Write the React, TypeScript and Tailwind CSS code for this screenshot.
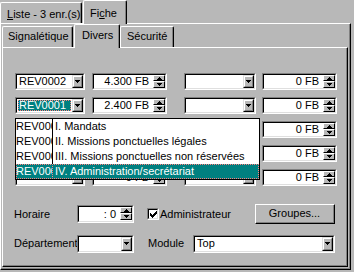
import React from "react";

function Down() {
  return (
    <svg width="5" height="3" shapeRendering="crispEdges" className="block">
      <rect x="0" y="0" width="5" height="1" fill="#000" />
      <rect x="1" y="1" width="3" height="1" fill="#000" />
      <rect x="2" y="2" width="1" height="1" fill="#000" />
    </svg>
  );
}

function Up() {
  return (
    <svg width="5" height="3" shapeRendering="crispEdges" className="block">
      <rect x="2" y="0" width="1" height="1" fill="#000" />
      <rect x="1" y="1" width="3" height="1" fill="#000" />
      <rect x="0" y="2" width="5" height="1" fill="#000" />
    </svg>
  );
}

function Check() {
  const rows: [number, number, number][] = [
    [6, 0, 1],
    [5, 1, 2],
    [0, 2, 1],
    [4, 2, 3],
    [0, 3, 2],
    [3, 3, 3],
    [0, 4, 5],
    [1, 5, 3],
    [2, 6, 1],
  ];
  return (
    <svg width="7" height="7" shapeRendering="crispEdges" className="block">
      {rows.map(([x, y, w], i) => (
        <rect key={i} x={x} y={y} width={w} height={1} fill="#000" />
      ))}
    </svg>
  );
}

function Sunken({ className, children }: { className: string; children?: React.ReactNode }) {
  return (
    <div className={"border border-t-[#808080] border-l-[#808080] border-r-white border-b-white " + className}>
      <div className="flex h-full border border-t-black border-l-black border-r-[#dfdfdf] border-b-[#dfdfdf] bg-white">
        {children}
      </div>
    </div>
  );
}

function ComboBtn() {
  return (
    <div className="h-full w-[11px] border border-t-[#dfdfdf] border-l-[#dfdfdf] border-r-black border-b-black">
      <div className="flex h-full items-center justify-center border border-t-white border-l-white border-r-[#808080] border-b-[#808080] bg-[#b8b8b8]">
        <Down />
      </div>
    </div>
  );
}

function SpinBtns() {
  return (
    <div className="flex h-full w-[12px] flex-col">
      <div className="flex h-[6px] items-center justify-center border border-t-white border-l-white border-r-black border-b-black bg-[#b8b8b8]">
        <Up />
      </div>
      <div className="flex h-[7px] items-center justify-center border border-t-white border-l-white border-r-black border-b-black bg-[#b8b8b8]">
        <Down />
      </div>
    </div>
  );
}

function Combo({ className, text, selected }: { className: string; text?: string; selected?: boolean }) {
  return (
    <Sunken className={className}>
      <div className="flex min-w-0 flex-1 items-center overflow-hidden whitespace-nowrap">
        {selected ? (
          <div className="m-[1px] flex h-[11px] flex-1 items-center bg-[#008080] pl-[1px] text-white outline outline-1 outline-dotted -outline-offset-1 outline-[#ff7f7f]">
            {text}
          </div>
        ) : (
          <span className="pl-[2px]">{text}</span>
        )}
      </div>
      <ComboBtn />
    </Sunken>
  );
}

function Spin({ className, text }: { className: string; text: string }) {
  return (
    <Sunken className={className}>
      <div className="flex flex-1 items-center justify-end whitespace-nowrap pr-[4px]">{text}</div>
      <SpinBtns />
    </Sunken>
  );
}

const items: [string, string][] = [
  ["REV0001", "I. Mandats"],
  ["REV0002", "II. Missions ponctuelles légales"],
  ["REV0003", "III. Missions ponctuelles non réservées"],
  ["REV0004", "IV. Administration/secrétariat"],
];

function Row({ children }: { children: React.ReactNode }) {
  return <div className="flex h-[17px]">{children}</div>;
}

export default function App() {
  return (
    <div className="h-[272px] w-[354px] overflow-hidden bg-[#b8b8b8] font-['Liberation_Sans',Arial,sans-serif] text-[11px] leading-[13px] text-black">
      {/* outer tabs */}
      <div className="flex h-[23px] items-end">
        <div className="h-[21px] w-[82px] rounded-tl-[2px] rounded-tr-[2px] border-t border-l border-r border-t-white border-l-white border-r-black">
          <div className="h-full border-r border-r-[#808080] pl-[6px] pt-[5px] whitespace-nowrap">
            <span className="underline">L</span>iste - 3 enr.(s)
          </div>
        </div>
        <div className="relative z-10 -mb-[1px] ml-[1px] h-[24px] w-[44px] rounded-tl-[2px] rounded-tr-[2px] border-t border-l border-r border-t-white border-l-white border-r-black bg-[#b8b8b8]">
          <div className="h-full border-r border-r-[#808080] pl-[6px] pt-[6px] whitespace-nowrap">
            Fi<span className="underline">c</span>he
          </div>
        </div>
      </div>

      {/* outer panel */}
      <div className="h-[247px] w-[351px] border border-t-white border-l-white border-r-black border-b-black">
        <div className="flex h-full flex-col border-r border-b border-r-[#808080] border-b-[#808080] pb-[1px] pl-[1px] pr-[1px]">
          {/* inner tabs */}
          <div className="flex h-[23px] shrink-0 items-end">
            <div className="h-[21px] w-[71px] rounded-tl-[2px] rounded-tr-[2px] border-t border-l border-r border-t-white border-l-white border-r-black">
              <div className="h-full border-r border-r-[#808080] pl-[5px] pt-[3px] whitespace-nowrap">Signalétique</div>
            </div>
            <div className="relative z-10 -mb-[1px] ml-[1px] h-[24px] w-[46px] rounded-tl-[2px] rounded-tr-[2px] border-t border-l border-r border-t-white border-l-white border-r-black bg-[#b8b8b8]">
              <div className="h-full border-r border-r-[#808080] pl-[7px] pt-[4px] whitespace-nowrap">Divers</div>
            </div>
            <div className="h-[21px] w-[54px] rounded-tl-[2px] rounded-tr-[2px] border-t border-l border-r border-t-white border-l-white border-r-black">
              <div className="h-full border-r border-r-[#808080] pl-[6px] pt-[3px] whitespace-nowrap">Sécurité</div>
            </div>
          </div>

          {/* inner panel */}
          <div className="flex-1 border border-t-white border-l-white border-r-black border-b-black">
            <div className="flex h-full flex-col border-r border-b border-r-[#808080] border-b-[#808080] pl-[12px] pt-[25px]">
              <div className="flex flex-col gap-[7px]">
                <Row>
                  <Combo className="h-[17px] w-[70px]" text="REV0002" />
                  <Spin className="ml-[7px] h-[17px] w-[75px]" text="4.300 FB" />
                  <Combo className="ml-[17px] h-[17px] w-[72px]" />
                  <Spin className="ml-[6px] h-[17px] w-[75px]" text="0 FB" />
                </Row>
                <Row>
                  <div className="relative">
                    <Combo className="h-[17px] w-[70px]" text="REV0001" selected />
                    <div className="absolute left-0 top-[21px] z-20 w-[245px] border border-black bg-white">
                      {items.map(([c, t], i) => {
                        const sel = i === 3;
                        return (
                          <div
                            key={i}
                            className={
                              sel
                                ? "flex h-[15px] items-center whitespace-nowrap bg-[#008080] text-white outline outline-1 outline-dotted -outline-offset-1 outline-[#ff7f7f]"
                                : "flex h-[15px] items-center whitespace-nowrap"
                            }
                          >
                            <div className="w-[36px] overflow-hidden">{c}</div>
                            <div
                              className={
                                sel
                                  ? "h-full border-l border-dotted border-l-[#ff7f7f]"
                                  : "h-full border-l border-l-black"
                              }
                            />
                            <div className="pl-[2px]">{t}</div>
                          </div>
                        );
                      })}
                    </div>
                  </div>
                  <Spin className="ml-[7px] h-[17px] w-[75px]" text="2.400 FB" />
                  <Combo className="ml-[17px] h-[17px] w-[72px]" />
                  <Spin className="ml-[6px] h-[17px] w-[75px]" text="0 FB" />
                </Row>
                {[0, 1, 2].map((k) => (
                  <Row key={k}>
                    <Combo className="h-[17px] w-[70px]" />
                    <Spin className="ml-[7px] h-[17px] w-[75px]" text="0 FB" />
                    <Combo className="ml-[17px] h-[17px] w-[72px]" />
                    <Spin className="ml-[6px] h-[17px] w-[75px]" text="0 FB" />
                  </Row>
                ))}
              </div>

              {/* Horaire row */}
              <div className="mr-[11px] mt-[18px] flex h-[20px] items-center">
                <div className="-ml-[1px] w-[63px] whitespace-nowrap">Horaire</div>
                <Spin className="h-[18px] w-[57px]" text=": 0" />
                <div className="ml-[13px] h-[12px] w-[12px] border border-t-[#808080] border-l-[#808080] border-r-white border-b-white">
                  <div className="flex h-full items-center justify-center border border-t-black border-l-black border-r-[#dfdfdf] border-b-[#dfdfdf] bg-white">
                    <Check />
                  </div>
                </div>
                <div className="ml-[1px] whitespace-nowrap">Administrateur</div>
                <div className="ml-auto h-[20px] w-[80px] border border-t-white border-l-white border-r-black border-b-black">
                  <div className="flex h-full items-center justify-center border-r border-b border-r-[#808080] border-b-[#808080]">
                    Groupes...
                  </div>
                </div>
              </div>

              {/* Département row */}
              <div className="mt-[10px] flex h-[19px] items-center">
                <div className="-ml-[1px] w-[63px] whitespace-nowrap">Département</div>
                <Combo className="h-[18px] w-[57px]" />
                <div className="ml-[14px] whitespace-nowrap">Module</div>
                <Combo className="ml-[9px] h-[18px] w-[142px]" text="Top" />
              </div>
            </div>
          </div>
        </div>
      </div>
    </div>
  );
}
